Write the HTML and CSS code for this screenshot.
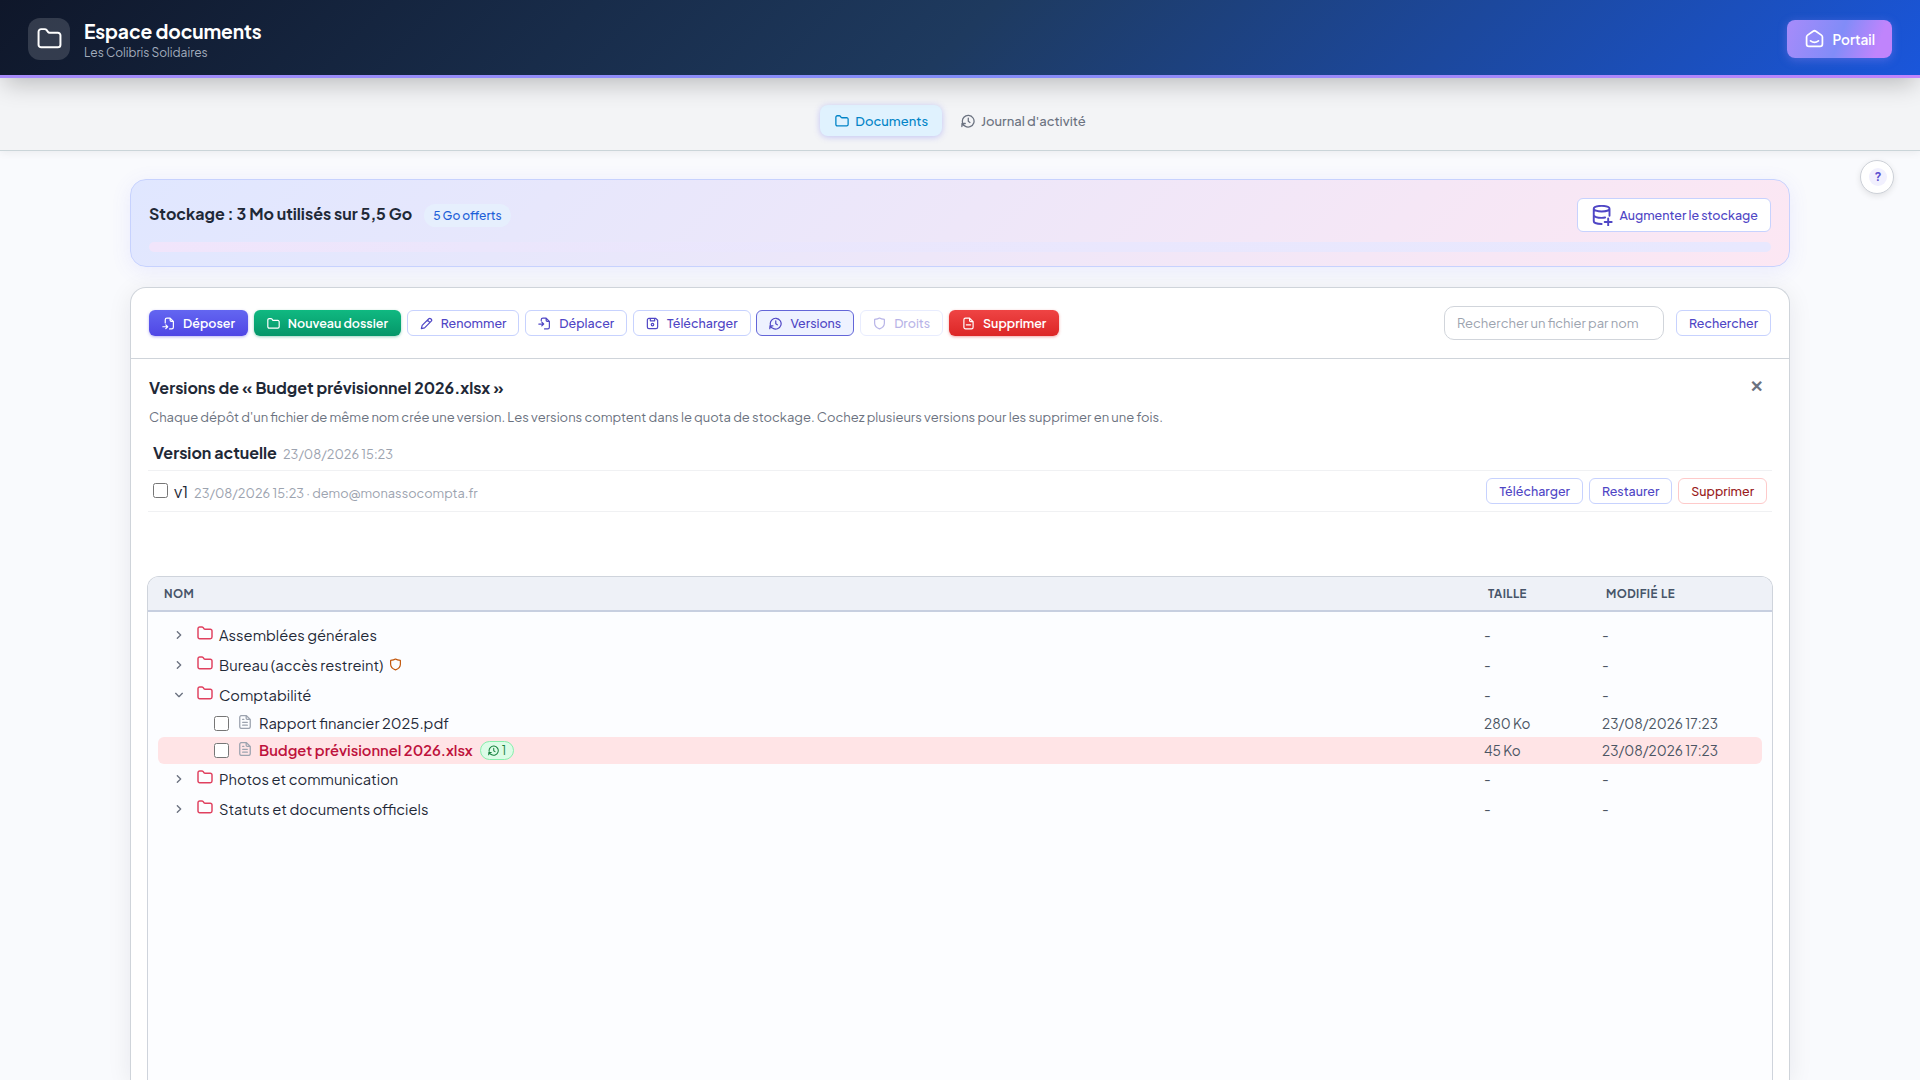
FILE: index.html
```html
<!DOCTYPE html>
<html lang="fr">
<head>
    <meta charset="UTF-8">
    <meta name="viewport" content="width=device-width, initial-scale=1.0">
    <title>Espace documents</title>
    <link rel="stylesheet" href="styles.css">
</head>
<body>
    <svg class="sprite" aria-hidden="true">
        <symbol id="i-folder" viewBox="0 0 24 24"><path d="M1.500 18V5.500A2.500 2.500 0 0 1 4 3h3.300a2.500 2.500 0 0 1 2 1l1.200 1.600a2 2 0 0 0 1.600.8H20a2.500 2.500 0 0 1 2.500 2.500V18a2.500 2.500 0 0 1-2.500 2.500H4A2.500 2.500 0 0 1 1.500 18z"/></symbol>
        <symbol id="i-history" viewBox="0 0 24 24"><path d="M2.500 14a10 10 0 1 1 4.500 6.800M1.500 21.500l.3-5.500 5.500.3M2.500 16.500c1 2.200 2.500 3.600 4.500 4.300M12.500 7v5.500l2.800 2"/></symbol>
        <symbol id="i-home" viewBox="0 0 24 24"><path d="M2 10.200v8.800a3 3 0 0 0 3 3h14a3 3 0 0 0 3-3v-8.800a3 3 0 0 0-1.300-2.500l-7-4.900a3 3 0 0 0-3.400 0l-7 4.900A3 3 0 0 0 2 10.200zM7 15c3 2.300 7 2.300 10 0"/></symbol>
        <symbol id="i-db" viewBox="0 0 24 24"><path d="M2 4.200C2 2.400 6 1 11 1s9 1.400 9 3.200-4 3.200-9 3.200-9-1.400-9-3.200zM2 4.200v14.300c0 1.800 4 3.200 9 3.200M20 4.200v8M2 11.500c0 1.800 4 3.200 9 3.200 1.500 0 3-.2 4-.4M18.500 15.500v8M14.500 19.500h8"/></symbol>
        <symbol id="i-upload" viewBox="0 0 24 24"><path d="M6 11V5a3 3 0 0 1 3-3h6l6 6v11a3 3 0 0 1-3 3h-4M15 2v4a2 2 0 0 0 2 2h4M1.500 18h9M7 14.500l3.500 3.500L7 21.500"/></symbol>
        <symbol id="i-move" viewBox="0 0 24 24"><path d="M6 7V5a3 3 0 0 1 3-3h6l6 6v11a3 3 0 0 1-3 3h-6M15 2v4a2 2 0 0 0 2 2h4M1.500 13h9M7 9.500l3.500 3.500L7 16.500"/></symbol>
        <symbol id="i-pencil" viewBox="0 0 24 24"><path d="M2.500 21.500l1.500-6L16.300 3.200a2.500 2.500 0 0 1 3.500 0l1 1a2.500 2.500 0 0 1 0 3.500L8.500 20zM14 6l4 4"/></symbol>
        <symbol id="i-save" viewBox="0 0 24 24"><path d="M2.500 5.500a3 3 0 0 1 3-3h12.500l3.500 3.500v12.500a3 3 0 0 1-3 3h-13a3 3 0 0 1-3-3zM8 2.500v4.500h8V2.500"/><circle cx="12" cy="14" r="2.300"/></symbol>
        <symbol id="i-shield" viewBox="0 0 24 24"><path d="M12 2c2.500 1.800 5.500 2.300 9 2.500v7c0 5-4 8.500-9 10.500-5-2-9-5.500-9-10.500v-7C6.500 4.300 9.500 3.800 12 2z"/></symbol>
        <symbol id="i-file" viewBox="0 0 24 24"><path d="M3 4a3 3 0 0 1 3-3h8l7 6.500V20a3 3 0 0 1-3 3H6a3 3 0 0 1-3-3zM14 1v4.500a2 2 0 0 0 2 2h5M8 12.500h8M8 17.500h8M8 7.500h2"/></symbol>
        <symbol id="i-file-minus" viewBox="0 0 24 24"><path d="M3.500 5a3 3 0 0 1 3-3H14l6.500 6.500V19a3 3 0 0 1-3 3h-11a3 3 0 0 1-3-3zM14 2v4.500a2 2 0 0 0 2 2h4.500M8 14.500h8"/></symbol>
        <symbol id="i-chevron" viewBox="0 0 24 24"><path d="M7 2l10 10L7 22"/></symbol>
    </svg>

    <header class="header">
        <div class="brand">
            <span class="brand-icon"><svg class="icon"><use href="#i-folder"/></svg></span>
            <div>
                <h1 class="brand-title">Espace documents</h1>
                <p class="brand-sub">Les Colibris Solidaires</p>
            </div>
        </div>
        <a class="portal-btn" href="#"><svg class="icon"><use href="#i-home"/></svg>Portail</a>
    </header>

    <nav class="tabs">
        <a class="tab active" href="#"><svg class="icon"><use href="#i-folder"/></svg>Documents</a>
        <a class="tab" href="#"><svg class="icon"><use href="#i-history"/></svg>Journal d'activité</a>
    </nav>
    <button class="help"><span>?</span></button>

    <main class="page">
        <section class="storage">
            <div class="storage-top">
                <h2 class="storage-title">Stockage : 3 Mo utilisés sur 5,5 Go</h2>
                <span class="storage-badge">5 Go offerts</span>
                <button class="btn storage-btn"><svg class="icon"><use href="#i-db"/></svg>Augmenter le stockage</button>
            </div>
            <div class="storage-bar"></div>
        </section>

        <section class="card">
            <div class="toolbar">
                <button class="btn primary"><svg class="icon"><use href="#i-upload"/></svg>Déposer</button>
                <button class="btn success"><svg class="icon"><use href="#i-folder"/></svg>Nouveau dossier</button>
                <button class="btn"><svg class="icon"><use href="#i-pencil"/></svg>Renommer</button>
                <button class="btn"><svg class="icon"><use href="#i-move"/></svg>Déplacer</button>
                <button class="btn"><svg class="icon"><use href="#i-save"/></svg>Télécharger</button>
                <button class="btn selected"><svg class="icon"><use href="#i-history"/></svg>Versions</button>
                <button class="btn disabled"><svg class="icon"><use href="#i-shield"/></svg>Droits</button>
                <button class="btn danger"><svg class="icon"><use href="#i-file-minus"/></svg>Supprimer</button>
                <div class="search">
                    <input type="text" placeholder="Rechercher un fichier par nom">
                    <button class="btn">Rechercher</button>
                </div>
            </div>

            <div class="versions">
                <div class="versions-head">
                    <h3>Versions de « Budget prévisionnel 2026.xlsx »</h3>
                    <button class="close">✕</button>
                </div>
                <p class="versions-help">Chaque dépôt d'un fichier de même nom crée une version. Les versions comptent dans le quota de stockage. Cochez plusieurs versions pour les supprimer en une fois.</p>
                <div class="version current">
                    <strong>Version actuelle</strong>
                    <span class="muted">23/08/2026 15:23</span>
                </div>
                <div class="version">
                    <input type="checkbox">
                    <span class="version-name">v1</span>
                    <span class="muted">23/08/2026 15:23 · demo@monassocompta.fr</span>
                    <div class="version-actions">
                        <button class="btn">Télécharger</button>
                        <button class="btn">Restaurer</button>
                        <button class="btn danger-outline">Supprimer</button>
                    </div>
                </div>
            </div>

            <div class="files">
                <div class="files-head">
                    <span class="col-name">NOM</span>
                    <span class="col-size">TAILLE</span>
                    <span class="col-date">MODIFIÉ LE</span>
                </div>
                <div class="tree">
                    <div class="row folder">
                        <span class="col-name"><svg class="icon chevron"><use href="#i-chevron"/></svg><svg class="icon"><use href="#i-folder"/></svg>Assemblées générales</span>
                        <span class="col-size">-</span>
                        <span class="col-date">-</span>
                    </div>
                    <div class="row folder">
                        <span class="col-name"><svg class="icon chevron"><use href="#i-chevron"/></svg><svg class="icon"><use href="#i-folder"/></svg>Bureau (accès restreint)<svg class="icon restricted"><use href="#i-shield"/></svg></span>
                        <span class="col-size">-</span>
                        <span class="col-date">-</span>
                    </div>
                    <div class="row folder">
                        <span class="col-name"><svg class="icon chevron open"><use href="#i-chevron"/></svg><svg class="icon"><use href="#i-folder"/></svg>Comptabilité</span>
                        <span class="col-size">-</span>
                        <span class="col-date">-</span>
                    </div>
                    <div class="row file">
                        <span class="col-name"><input type="checkbox"><svg class="icon"><use href="#i-file"/></svg>Rapport financier 2025.pdf</span>
                        <span class="col-size">280 Ko</span>
                        <span class="col-date">23/08/2026 17:23</span>
                    </div>
                    <div class="row file active">
                        <span class="col-name"><input type="checkbox"><svg class="icon"><use href="#i-file"/></svg><span class="file-name">Budget prévisionnel 2026.xlsx</span><span class="count"><svg class="icon"><use href="#i-history"/></svg>1</span></span>
                        <span class="col-size">45 Ko</span>
                        <span class="col-date">23/08/2026 17:23</span>
                    </div>
                    <div class="row folder">
                        <span class="col-name"><svg class="icon chevron"><use href="#i-chevron"/></svg><svg class="icon"><use href="#i-folder"/></svg>Photos et communication</span>
                        <span class="col-size">-</span>
                        <span class="col-date">-</span>
                    </div>
                    <div class="row folder">
                        <span class="col-name"><svg class="icon chevron"><use href="#i-chevron"/></svg><svg class="icon"><use href="#i-folder"/></svg>Statuts et documents officiels</span>
                        <span class="col-size">-</span>
                        <span class="col-date">-</span>
                    </div>
                </div>
            </div>
        </section>
    </main>
</body>
</html>
```
FILE: styles.css
```css
* {
    box-sizing: border-box;
}
body {
    display: flex;
    flex-direction: column;
    margin: 0;
    height: 100vh;
    overflow: hidden;
    font-family: "Plus Jakarta Sans", Inter, "Liberation Sans", sans-serif;
    font-size: 16px;
    color: #1f2937;
    background: #f9fafd;
}
h1, h2, h3, p {
    margin: 0;
}
a {
    text-decoration: none;
}
button, input {
    font-family: inherit;
}
.sprite {
    display: none;
}
.icon {
    flex: none;
    width: 14px;
    height: 14px;
    fill: none;
    stroke: currentColor;
    stroke-width: 2.2;
    stroke-linecap: round;
    stroke-linejoin: round;
    overflow: visible;
}

/* Header */
.header {
    position: relative;
    z-index: 2;
    display: flex;
    flex: none;
    align-items: center;
    justify-content: space-between;
    height: 78px;
    padding: 0 28px;
    border-bottom: 3px solid;
    border-image: linear-gradient(90deg, #a78bfa, #818cf8 50%, #c084fc) 1;
    background: linear-gradient(135deg, #0f172a 0%, #1e3a5f 50%, #1a56db 100%);
    box-shadow: 0 10px 24px -4px rgba(0, 0, 0, 0.23);
}
.brand {
    display: flex;
    align-items: center;
    gap: 14px;
    padding-top: 3px;
}
.brand-icon {
    display: flex;
    align-items: center;
    justify-content: center;
    width: 42px;
    height: 42px;
    border-radius: 12px;
    color: #fff;
    background: rgba(255, 255, 255, 0.15);
}
.brand-icon .icon {
    width: 25px;
    height: 25px;
    margin-bottom: 2px;
    stroke-width: 1.9;
}
.brand-title {
    padding-top: 1px;
    font-size: 19.2px;
    font-weight: 700;
    line-height: 25px;
    letter-spacing: -0.1px;
    color: #fff;
}
.brand-sub {
    padding-top: 1px;
    font-size: 12px;
    line-height: 16px;
    margin-bottom: -1px;
    color: #a3adbd;
}
.portal-btn {
    display: flex;
    align-items: center;
    gap: 9px;
    height: 38px;
    margin-top: 2px;
    padding: 1px 17px 0 18px;
    border-radius: 8px;
    color: #fff;
    font-size: 13.6px;
    font-weight: 600;
    background: linear-gradient(110deg, #a78bfa, #818cf8 50%, #c084fc 85%);
    box-shadow: 0 2px 10px rgba(167, 139, 250, 0.35);
}
.portal-btn .icon {
    width: 19px;
    height: 19px;
    margin-bottom: 1px;
}

/* Tabs */
.tabs {
    display: flex;
    flex: none;
    justify-content: center;
    gap: 4px;
    height: 73px;
    padding-top: 27px;
    border-bottom: 1px solid #cbd5d9;
    background: #f3f4f6;
    box-shadow: 0 2px 8px rgba(0, 0, 0, 0.06);
}
.tab {
    display: flex;
    align-items: center;
    gap: 6px;
    height: 31px;
    padding: 0 14px 0 15px;
    border-radius: 8px;
    font-size: 13px;
    font-weight: 500;
    color: #6b7280;
}
.tab.active {
    color: #0284c7;
    background: #e0f2fe;
    box-shadow: 0 1px 6px rgba(99, 102, 241, 0.35);
}
.help {
    position: absolute;
    top: 160px;
    right: 26px;
    display: flex;
    align-items: center;
    justify-content: center;
    width: 34px;
    height: 34px;
    padding: 0;
    border: 1px solid #cdd1d8;
    border-radius: 50%;
    background: #fff;
    box-shadow: 0 2px 6px rgba(0, 0, 0, 0.1);
}
.help span {
    width: 18px;
    height: 18px;
    margin-left: 2px;
    border-radius: 50%;
    font-size: 12px;
    font-weight: 700;
    line-height: 18px;
    color: #5b4fd0;
    background: #f1f0fe;
}

.page {
    display: flex;
    flex: 1;
    flex-direction: column;
    width: 1660px;
    min-height: 0;
    margin: 28px auto 0;
}

/* Buttons */
.btn {
    display: flex;
    align-items: center;
    gap: 8px;
    height: 26px;
    padding: 0 12px;
    border: 1px solid #c7d2fe;
    border-radius: 6px;
    font-size: 12.48px;
    font-weight: 500;
    color: #4f46c5;
    background: #fff;
    white-space: nowrap;
}
.btn.primary, .btn.success, .btn.danger {
    border: none;
    padding: 0 13px;
    font-weight: 600;
    color: #fff;
}
.btn.primary {
    background: linear-gradient(#6366f1, #4f46e5);
    box-shadow: 0 1px 3px rgba(79, 70, 229, 0.4);
}
.btn.success {
    background: linear-gradient(#10b981, #059669);
    box-shadow: 0 1px 3px rgba(5, 150, 105, 0.4);
}
.btn.danger {
    background: linear-gradient(#ef4444, #dc2626);
    box-shadow: 0 1px 3px rgba(220, 38, 38, 0.4);
}
.btn.selected {
    border-color: #6366d8;
    background: #eef2ff;
}
.btn.disabled {
    opacity: 0.4;
}
.btn.danger-outline {
    border-color: #fecaca;
    color: #991b1b;
}

/* Storage */
.storage {
    flex: none;
    height: 88px;
    padding: 18px 18px 0;
    border: 1px solid #c7d2fe;
    border-radius: 16px;
    background: linear-gradient(135deg, #e0e7ff, #fce7f3);
    box-shadow: 0 4px 20px rgba(99, 102, 241, 0.1);
}
.storage-top {
    display: flex;
    align-items: center;
}
.storage-title {
    font-size: 16px;
    font-weight: 700;
    line-height: 30px;
    padding-bottom: 2px;
}
.storage-badge {
    margin-left: 12px;
    padding: 0 9px;
    border-radius: 12px;
    font-size: 12px;
    font-weight: 500;
    line-height: 23px;
    color: #1d5fd8;
    background: #e6effd;
}
.storage-btn {
    height: 34px;
    margin-left: auto;
    padding: 0 12px 0 14px;
    gap: 7px;
}
.storage-btn .icon {
    width: 21px;
    height: 21px;
    stroke-width: 2.2;
}
.storage-bar {
    height: 10px;
    margin-top: 10px;
    border-radius: 5px;
    background: linear-gradient(90deg, #f1e5fb, #ebe6fc 20%, #e8e8fe);
}

/* Card */
.card {
    display: flex;
    flex: 1;
    flex-direction: column;
    min-height: 0;
    margin-top: 20px;
    border: 1px solid #cfd4da;
    border-bottom: none;
    border-radius: 16px 16px 0 0;
    background: #fff;
    box-shadow: 0 4px 24px rgba(15, 23, 42, 0.08);
}
.toolbar {
    display: flex;
    flex: none;
    align-items: center;
    gap: 5.9px;
    height: 71px;
    padding: 0 18px;
    border-bottom: 1px solid #cfd4da;
}
.toolbar .icon {
    width: 13px;
    height: 13px;
}
.search {
    display: flex;
    align-items: center;
    gap: 12px;
    margin-left: auto;
}
.search input {
    width: 220px;
    height: 34px;
    padding: 0 12px;
    border: 1px solid #d1d5db;
    border-radius: 10px;
    font-size: 13px;
}
.search input::placeholder {
    color: #9ca3af;
}

/* Versions panel */
.versions {
    flex: none;
    height: 217px;
    padding: 18px 17px 0;
}
.versions-head {
    display: flex;
    justify-content: space-between;
    padding-left: 1px;
}
.versions-head h3 {
    font-size: 16px;
    font-weight: 700;
    line-height: 22px;
}
.close {
    width: 20px;
    height: 18px;
    margin-right: 6px;
    padding: 0;
    border: none;
    background: none;
    font-size: 16px;
    font-weight: 700;
    line-height: 18px;
    color: #6b7280;
}
.versions-help {
    margin-top: 8px;
    padding-left: 1px;
    font-size: 13px;
    line-height: 20px;
    color: #6b7280;
    white-space: nowrap;
}
.version {
    display: flex;
    align-items: center;
    height: 41px;
    padding: 0 5px;
    border-bottom: 1px solid #f0f1f3;
}
.version.current {
    height: 44px;
    padding-top: 8px;
}
.version input, .row input {
    flex: none;
    width: 15px;
    height: 15px;
    margin: 0;
}
.version input {
    margin-bottom: 1px;
}
.version-name {
    width: 20px;
    margin-left: 6px;
}
.version .muted {
    padding-top: 3px;
    color: #9ca3af;
    font-size: 12.8px;
}
.version.current .muted {
    margin-left: 6px;
}
.version-actions {
    display: flex;
    gap: 6px;
    margin-left: auto;
}

/* Files */
.files {
    flex: 1;
    min-height: 0;
    margin: 0 16px;
    border: 1px solid #cfd4dc;
    border-bottom: none;
    border-radius: 12px 12px 0 0;
    background: #fcfdff;
    overflow: hidden;
}
.files-head {
    display: flex;
    height: 35px;
    padding: 0 16px;
    border-bottom: 2px solid #c7cfe0;
    font-size: 11.5px;
    font-weight: 700;
    line-height: 33px;
    letter-spacing: 0.4px;
    word-spacing: 1px;
    color: #475569;
    background: #eef1f7;
}
.tree {
    padding: 8px 10px;
}
.col-name {
    display: flex;
    align-items: center;
    flex: 1;
}
.col-size {
    width: 118px;
}
.col-date {
    width: 160px;
}
.files-head .col-date {
    width: 150px;
}
.row {
    display: flex;
    align-items: center;
    height: 30px;
    border-radius: 6px;
    font-size: 14.72px;
}
.row.file {
    height: 27px;
}
.row .col-size, .row .col-date {
    font-size: 13.6px;
    color: #4b5563;
}
.row.file .col-size, .row.file .col-date {
    padding-bottom: 1px;
}
.row.file .col-name {
    padding: 0 0 2px 56px;
}
.row.folder .col-name {
    padding-left: 17px;
}
.row.folder .icon {
    width: 16px;
    height: 16px;
    margin: 0 6px 4px 0;
    color: #e0405f;
}
.row.folder .icon.chevron {
    width: 8px;
    height: 8px;
    margin: 0 14px 1px 0;
    color: #6b7280;
    stroke-width: 4;
}
.row.folder .icon.open {
    transform: rotate(90deg);
}
.row.folder .icon.restricted {
    width: 13px;
    height: 13px;
    margin: 0 0 1px 6px;
    color: #c2570c;
}
.row.file input {
    margin-top: 2px;
}
.row.file .icon {
    width: 14px;
    margin: 0 7px 2px 9px;
    color: #9ca3af;
}
.row.active {
    background: #ffe4e6;
}
.file-name {
    font-weight: 600;
    color: #be123c;
}
.count {
    display: flex;
    align-items: center;
    gap: 3px;
    height: 19px;
    margin: 2px 0 0 7px;
    padding: 0 7px;
    border: 1px solid #86efac;
    border-radius: 10px;
    font-size: 12px;
    color: #15803d;
    background: #dcfce7;
}
.row.file .count .icon {
    width: 11px;
    height: 11px;
    margin: 0;
    color: #15803d;
}
```
